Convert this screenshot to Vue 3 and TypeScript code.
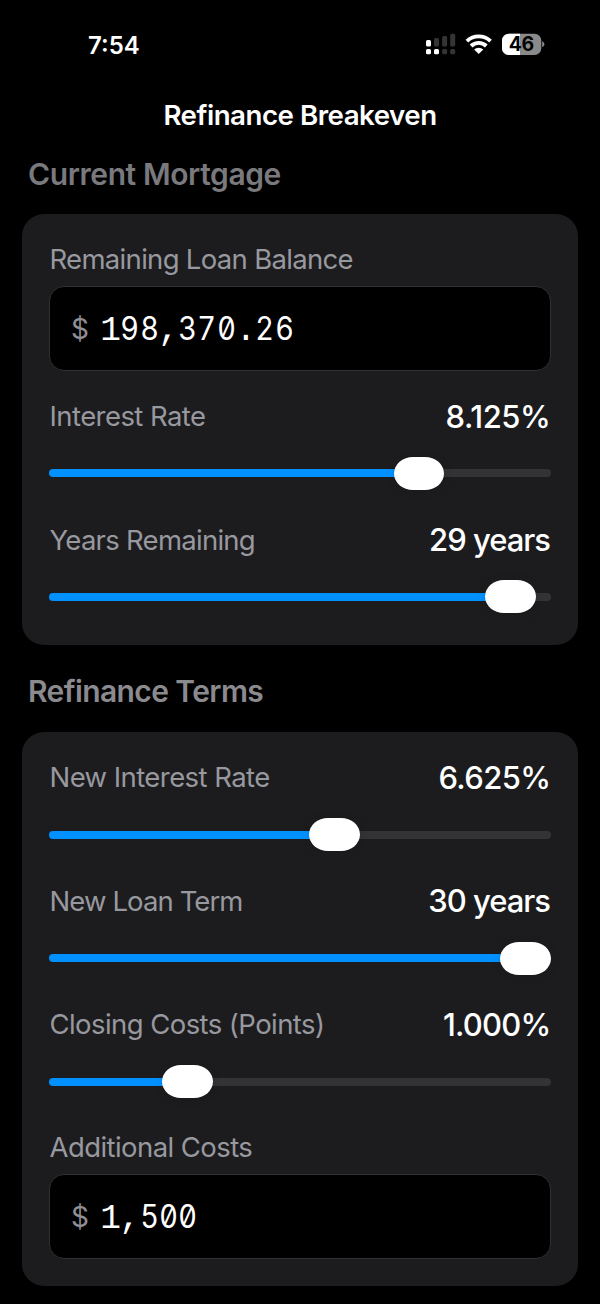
<script setup lang="ts">
interface SliderField {
  kind: 'slider'
  id: string
  label: string
  value: string
  offset: number
}
interface MoneyField {
  kind: 'money'
  id: string
  label: string
  value: string
}
interface Section {
  id: string
  title: string
  fields: (SliderField | MoneyField)[]
}

const sections: Section[] = [
  {
    id: 'current',
    title: 'Current Mortgage',
    fields: [
      { kind: 'money', id: 'balance', label: 'Remaining Loan Balance', value: '198,370.26' },
      { kind: 'slider', id: 'rate', label: 'Interest Rate', value: '8.125%', offset: 344.8 },
      { kind: 'slider', id: 'years', label: 'Years Remaining', value: '29 years', offset: 436.1 },
    ],
  },
  {
    id: 'terms',
    title: 'Refinance Terms',
    fields: [
      { kind: 'slider', id: 'new-rate', label: 'New Interest Rate', value: '6.625%', offset: 260.3 },
      { kind: 'slider', id: 'new-term', label: 'New Loan Term', value: '30 years', offset: 451.2 },
      { kind: 'slider', id: 'points', label: 'Closing Costs (Points)', value: '1.000%', offset: 113.2 },
      { kind: 'money', id: 'costs', label: 'Additional Costs', value: '1,500' },
    ],
  },
]

// Digits sit in equal-width cells; "1" and punctuation use the monospaced face.
const cellClass = (c: string): string => (/[02-9]/.test(c) ? 'digit' : 'mono')
</script>

<template>
  <main class="screen">
    <header class="status">
      <span class="time">7:54</span>
      <svg class="icons" width="120" height="24" viewBox="425 32 120 24">
        <g fill="#fff">
          <rect x="426" y="40" width="5" height="6.4" rx="1.5" />
          <rect x="426" y="49" width="5" height="5.2" rx="1.5" />
          <rect x="434" y="49" width="5" height="5.2" rx="1.5" />
        </g>
        <g fill="#343434">
          <rect x="434" y="38" width="5" height="8.4" rx="1.5" />
          <rect x="442.1" y="36" width="5" height="10.4" rx="1.5" />
          <rect x="450.2" y="33.8" width="5" height="12.6" rx="1.5" />
          <rect x="442.1" y="49" width="5" height="5.2" rx="1.5" />
          <rect x="450.2" y="49" width="5" height="5.2" rx="1.5" />
        </g>
        <g fill="none" stroke="#fff" stroke-width="3.9">
          <path d="M466.9 41.1a17 17 0 0 1 23.6 0" />
          <path d="M471.1 46a10.8 10.8 0 0 1 15.2 0" />
        </g>
        <path d="M478.7 54l-4.6-4.4a6.5 6.5 0 0 1 9.2 0z" fill="#fff" />
        <clipPath id="cell"><rect x="502" y="33.8" width="39.3" height="21.2" rx="6.8" /></clipPath>
        <g clip-path="url(#cell)">
          <rect x="502" y="33" width="40" height="23" fill="#8a8a8a" />
          <rect x="502" y="33" width="18" height="23" fill="#fff" />
        </g>
        <path d="M542.2 41.2q2.2 .9 2.2 3t-2.2 3z" fill="#8a8a8a" />
        <text class="charge" x="521.3" y="51.4" text-anchor="middle">46</text>
      </svg>
    </header>
    <h1 class="title">Refinance Breakeven</h1>

    <section v-for="s in sections" :key="s.id" :class="['section', s.id]">
      <h2>{{ s.title }}</h2>
      <div class="card">
        <div v-for="f in s.fields" :key="f.id" :class="['field', f.id]">
          <div class="row">
            <span class="label">{{ f.label }}</span>
            <span v-if="f.kind === 'slider'" class="value">{{ f.value }}</span>
          </div>
          <div v-if="f.kind === 'slider'" class="slider">
            <div class="fill" :style="{ width: f.offset + 8 + 'px' }"></div>
            <div class="thumb"></div>
            <div class="rest"></div>
          </div>
          <div v-else class="input">
            <span class="dollar">$</span>
            <span class="amount"><span v-for="(c, i) in f.value" :key="i" :class="cellClass(c)">{{ c }}</span></span>
          </div>
        </div>
      </div>
    </section>
  </main>
</template>

<style>
html,
body {
  margin: 0;
  background: #000;
}
</style>

<style scoped>
.screen {
  box-sizing: border-box;
  width: 600px;
  height: 1304px;
  overflow: hidden;
  background: #000;
  color: #fff;
  font-family: Inter, 'Liberation Sans', sans-serif;
}
.status {
  display: flex;
  justify-content: space-between;
  align-items: center;
  height: 88px;
  padding: 0 55px 0 88px;
}
.time {
  font-size: 24px;
  font-weight: 600;
  line-height: 28px;
  margin-top: 3px;
}
.icons {
  display: block;
}
.charge {
  font-size: 19.5px;
  font-weight: 700;
  letter-spacing: -0.5px;
  fill: #000;
}
.title {
  margin: 0;
  height: 54px;
  line-height: 54px;
  text-align: center;
  font-size: 27.7px;
  font-weight: 600;
  letter-spacing: -0.5px;
}
.section {
  padding: 0 22px;
}
h2 {
  margin: 0;
  padding: 14px 0 0 6px;
  height: 58px;
  line-height: 36px;
  font-size: 30px;
  font-weight: 600;
  color: #8a8a8f;
  letter-spacing: -0.4px;
}
.current h2 {
  color: #79797e;
}
.terms h2 {
  height: 59px;
  padding-top: 28px;
  letter-spacing: -0.6px;
}
.card {
  box-sizing: border-box;
  border-radius: 22px;
  background: #1c1c1e;
  padding: 26px 27px 0;
}
.current .card {
  height: 430.5px;
}
.terms .card {
  height: 554px;
  padding-top: 27.3px;
}
.row {
  display: flex;
  justify-content: space-between;
  align-items: center;
  height: 37px;
  padding-bottom: 1px;
}
.label {
  padding-left: 0.5px;
  font-size: 27.5px;
  color: #98989f;
  letter-spacing: -0.57px;
  white-space: nowrap;
}
.balance .label {
  letter-spacing: -0.69px;
}
.years .label {
  letter-spacing: -0.73px;
}
.new-term .label {
  letter-spacing: -0.9px;
}
.value {
  padding-right: 0.5px;
  font-size: 31px;
  font-weight: 500;
  letter-spacing: -0.6px;
  white-space: nowrap;
}
.rate .value {
  letter-spacing: -0.4px;
}
.years .value,
.new-term .value {
  padding-right: 1px;
  letter-spacing: -1px;
}
.points .value {
  letter-spacing: -0.8px;
}
.slider {
  display: flex;
  align-items: center;
  height: 33px;
  margin: 21.3px 0 31.3px;
}
.fill,
.rest {
  height: 8.2px;
  background: #0091ff;
  border-radius: 4.1px 0 0 4.1px;
  flex: none;
}
.rest {
  flex: 1;
  margin-left: -8px;
  background: #333335;
  border-radius: 0 4.1px 4.1px 0;
}
.new-term .rest {
  visibility: hidden;
}
.thumb {
  position: relative;
  z-index: 1;
  flex: none;
  width: 50.7px;
  height: 33px;
  margin-left: -8px;
  border-radius: 19px / 16.5px;
  background: #fff;
  box-shadow: 0 1px 10px rgba(0, 0, 0, 0.12);
}
.input {
  box-sizing: border-box;
  display: flex;
  align-items: center;
  height: 85px;
  margin: 8px 0 26.5px;
  padding-left: 21px;
  border: 1px solid #303033;
  border-radius: 15px;
  background: #000;
}
.costs {
  margin-top: -1.3px;
}
.dollar {
  width: 30px;
  font-size: 28px;
  color: #8e8e93;
}
.amount {
  display: flex;
  align-items: baseline;
  padding-top: 2px;
  font-size: 32px;
  line-height: 40px;
}
.digit,
.mono {
  display: flex;
  justify-content: center;
  width: 19.3px;
}
.digit {
  font-feature-settings: 'zero' 1, 'tnum' 1;
  transform: scaleX(0.9);
}
.mono {
  font-family: 'Liberation Mono', monospace;
  font-size: 34.5px;
}
</style>
